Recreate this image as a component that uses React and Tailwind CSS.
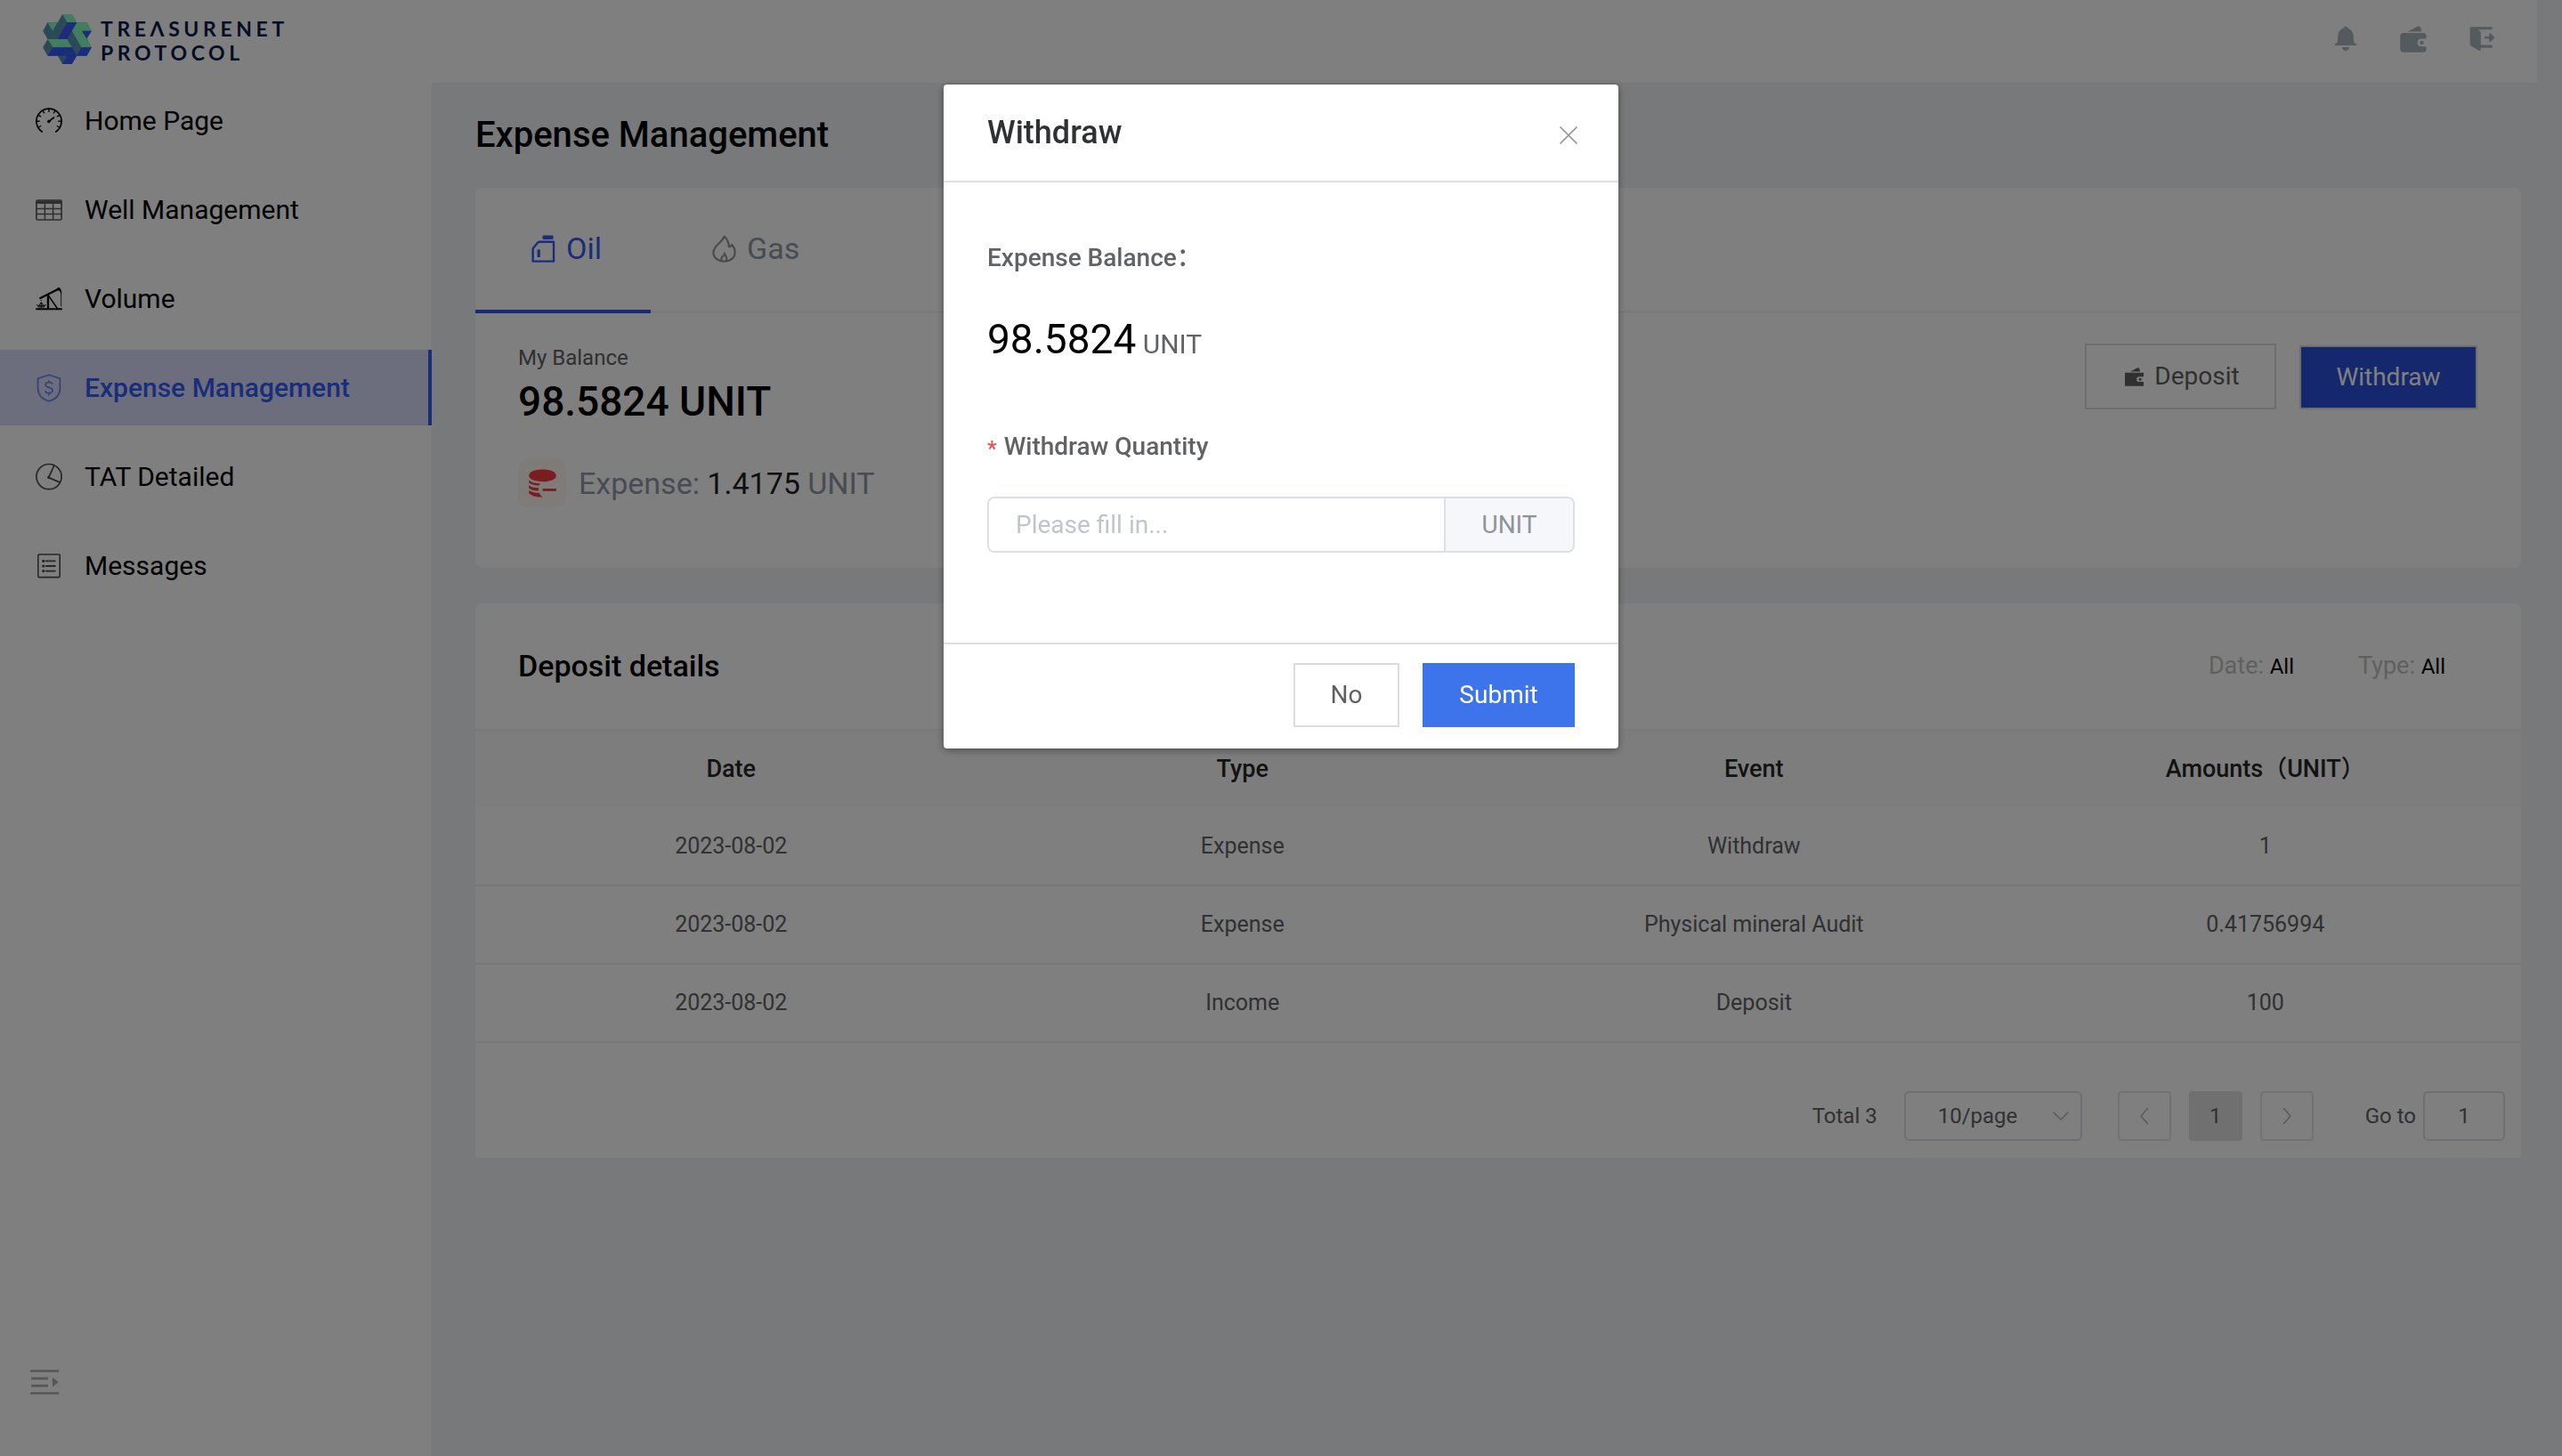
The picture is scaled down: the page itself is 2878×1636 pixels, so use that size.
import React from "react";

const TICKS = [-120, -90, -60, -30, 0, 30, 60, 90, 120];

function GaugeIcon() {
  return (
    <svg viewBox="0 0 30 30" className="size-[30px] shrink-0 text-black" fill="none" stroke="currentColor" strokeLinecap="round">
      <path d="M7.2 27 A14.1 14.1 0 1 1 22.8 27" strokeWidth="1.7" />
      {TICKS.map((angle) => (
        <path key={angle} d="M15 1.4 V4.4" strokeWidth="1.4" transform={`rotate(${angle} 15 15.3)`} />
      ))}
      <path d="M15 15.3 L20.6 11" strokeWidth="1.6" />
      <circle cx="14.8" cy="15.5" r="1.5" fill="currentColor" strokeWidth="0.6" />
    </svg>
  );
}

function TableIcon() {
  return (
    <svg viewBox="0 0 30 24" className="h-6 w-[30px] shrink-0 text-[#5c5c5c]" fill="none" stroke="currentColor" strokeWidth="1.7">
      <rect x="0.9" y="1" width="28.2" height="22" rx="1.4" />
      <path d="M1 1.4 H29 V5 H1 Z" fill="currentColor" stroke="none" />
      <path d="M1 10.4 H29 M1 16.4 H29 M10.4 5 V23 M19.6 5 V23" strokeWidth="1.5" />
    </svg>
  );
}

function PumpIcon() {
  return (
    <svg viewBox="0 0 90 78" className="h-[26px] w-[30px] shrink-0 text-black" fill="none" stroke="currentColor">
      <path d="M3 72.5 H87" strokeWidth="6" strokeLinecap="round" />
      <path d="M16 36 L77 5" strokeWidth="7" strokeLinecap="round" />
      <path d="M72 3 L79 0 C85 4 88 12 87 22 C83 12 79 8 72 9 Z" fill="currentColor" strokeWidth="1" />
      <path d="M86 18 V64" strokeWidth="2.4" />
      <path d="M42 24 V72" strokeWidth="7" />
      <path d="M44 28 L74 72" strokeWidth="4.5" />
      <path d="M4 57 L10 66 H28 L34 57 M12 60 L19 50 L26 60 M8 62 H30 M19 42 V46 M19 52 V66" strokeWidth="3" />
    </svg>
  );
}

function ShieldIcon() {
  return (
    <svg viewBox="0 0 30 32" className="h-8 w-[30px] shrink-0 text-[#6a82e4]" fill="none" stroke="currentColor" strokeWidth="1.7" strokeLinejoin="round">
      <path d="M15 1.2 L27.4 5.2 V16.5 C27.4 23.5 22.4 28.6 15 30.8 C7.6 28.6 2.6 23.5 2.6 16.5 V5.2 Z" />
      <path d="M19 11.6 C18.6 10.1 17.1 9.5 15 9.5 C12.7 9.5 11.2 10.6 11.2 12.4 C11.2 16.2 19 14.4 19 18.6 C19 20.6 17.4 21.8 15 21.8 C12.8 21.8 11.2 21 10.9 19.2 M15 7.6 V9.5 M15 21.8 V24.4" />
    </svg>
  );
}

function PieIcon() {
  return (
    <svg viewBox="0 0 30 32" className="h-8 w-[30px] shrink-0 text-[#4d4d4d]" fill="none" stroke="currentColor" strokeWidth="1.7">
      <circle cx="15" cy="15.6" r="14.1" />
      <path d="M21 2.6 L14.6 16.6 L28.2 22.4" strokeLinejoin="round" />
      <circle cx="14.8" cy="16.6" r="0.9" fill="currentColor" />
    </svg>
  );
}

function ListIcon() {
  return (
    <svg viewBox="0 0 30 28" className="h-7 w-[30px] shrink-0 text-[#4d4d4d]" fill="none" stroke="currentColor" strokeWidth="1.6" strokeLinecap="round">
      <rect x="2.8" y="1" width="24.4" height="25.6" rx="1" />
      <path d="M11.6 8.4 H21.8 M11.6 14 H21.8 M11.6 19.6 H21.8" strokeWidth="1.8" />
      <path d="M8.7 8.4 H8.8 M8.7 14 H8.8 M8.7 19.6 H8.8" strokeWidth="3.2" />
    </svg>
  );
}

function Emblem() {
  return (
    <svg viewBox="12 12 164 168" className="h-14 w-[55px] shrink-0" aria-hidden="true">
      <path fill="#5692b0" d="M78 12H110L126 40H160L176 68L160 94L176 124L160 152H126L110 180H78L62 152H28L12 124L28 96L12 68L28 40H62Z" />
      <path fill="#84fac0" d="M78 12H110L126 40H94Z M28 40H61L45 68Z M126 40H160L176 68H144L176 124H142L110 68Z M28 96H94L110 124H46Z" />
      <path fill="#3458f6" d="M94 40H126L94 96H62Z M144 68H176L160 94Z M142 124H176L160 152H126Z M46 124H110L126 152L110 180H78L94 152H28Z" />
    </svg>
  );
}

function BellIcon() {
  return (
    <svg viewBox="0 0 26 30" className="h-[30px] w-[26px]" fill="currentColor">
      <path d="M13 0.6 C14.4 0.6 15.1 1.6 15.3 2.6 C19.5 4 21.6 7.5 21.7 11.5 C21.8 15.5 22 18 23.2 19.4 L25 20.2 C25.8 20.8 25.6 22 24.6 22 H1.4 C0.4 22 0.2 20.8 1 20.2 L2.8 19.4 C4 18 4.2 15.5 4.3 11.5 C4.4 7.5 6.5 4 10.7 2.6 C10.9 1.6 11.6 0.6 13 0.6 Z" />
      <path d="M8.8 23.9 H17.2 C16.6 26.4 15 27.9 13 27.9 C11 27.9 9.4 26.4 8.8 23.9 Z" />
    </svg>
  );
}

function WalletIcon({ square = false }) {
  return (
    <svg viewBox="0 0 30 30" className={square ? "size-[21px]" : "size-[30px]"} fill="currentColor">
      <path d="M8.5 6.6 L19 0.9 C21.2 -0.1 23 0.9 23.6 2.9 L24.4 6.6 Z" />
      <path
        d={
          square
            ? "M0 8.2 H30 V14.5 H23 A4 4 0 0 0 23 23 H30 V29.6 H0 Z"
            : "M4 8 H26 A3.8 3.8 0 0 1 29.6 11.6 V14.6 H23.8 A4.3 4.3 0 0 0 23.8 23.2 H29.6 V26 A3.8 3.8 0 0 1 26 29.8 H4 A3.8 3.8 0 0 1 0.2 26 V11.8 A3.8 3.8 0 0 1 4 8 Z"
        }
      />
      <circle cx="24.5" cy="18.9" r="2.2" />
    </svg>
  );
}

function ExitIcon() {
  return (
    <svg viewBox="0 0 30 30" className="size-[30px]" fill="currentColor">
      <path d="M1.4 1.2 H24.5 A1.5 1.5 0 0 1 24.5 4.2 H9.5 L12.8 6.8 V21.6 H24.5 A1.5 1.5 0 0 1 24.5 24.8 H12.8 V26.6 A1.4 1.4 0 0 1 10.6 27.8 L1.4 22.2 A1.6 1.6 0 0 1 0.6 21 V2.4 A1.2 1.2 0 0 1 1.4 1.2 Z" />
      <path d="M18 12 H22 V9.4 A1.2 1.2 0 0 1 24 8.6 L28.6 13.2 L24 17.8 A1.2 1.2 0 0 1 22 17 V14.6 H18 A1.3 1.3 0 0 1 18 12 Z" />
    </svg>
  );
}

function CollapseIcon() {
  return (
    <svg viewBox="0 0 32 28" className="h-7 w-8" fill="currentColor">
      <path d="M0 0.2H32V2.8H0Z M1 8.6H20V11.2H1Z M1 16.8H20V19.4H1Z M0 25.2H32V27.8H0Z M25 8.6L31.6 14L25 19.4Z" />
    </svg>
  );
}

function OilIcon() {
  return (
    <svg viewBox="0 0 27 31" className="h-[31px] w-[27px]" fill="none" stroke="currentColor" strokeWidth="2.4" strokeLinejoin="round">
      <rect x="12.5" y="0.4" width="12" height="4.6" rx="1.2" fill="currentColor" stroke="none" />
      <path d="M9.4 7.8 H25 V29.6 H1.6 V16.4 Q1.6 15.4 2.2 14.6 L7 8.8 Q7.8 7.8 9.4 7.8 Z" />
      <path d="M8.2 16.4 V25" strokeWidth="3.2" />
    </svg>
  );
}

function GasIcon() {
  return (
    <svg viewBox="0 0 27 31" className="h-[31px] w-[27px] text-[#959595]" fill="none" stroke="currentColor" strokeWidth="2.2" strokeLinejoin="round">
      <path d="M13.4 1.6 C11.6 8.4 1.4 12 1.4 19.4 C1.4 25.6 6.6 29.6 13.4 29.6 C20.4 29.6 25.6 25.6 25.6 19.4 C25.6 16 24.4 13.2 22.2 11 C21.6 12.4 20.6 13.2 18.8 13.2 C18.8 8.2 16.8 4.4 13.4 1.6 Z" />
      <path d="M10.8 29 C9.6 26.4 11 24.4 12.6 23.4 C13.6 22.6 14 21.4 14 20.6 C14.4 23.6 17.2 24.4 16.4 29" strokeWidth="2" />
    </svg>
  );
}

function CoinsIcon() {
  return (
    <svg viewBox="0 0 31 32" className="h-8 w-[31px] text-[#f13c41]" fill="currentColor">
      <path d="M15.5 0.5 C24 0.5 30.8 3.2 30.8 7.2 C30.8 10.8 27 13 22 13.4 C18 15 14 14 10 13.6 C4 12.8 0.2 10.6 0.2 7.2 C0.2 3.2 7 0.5 15.5 0.5 Z" />
      <path d="M0.2 12.4 C3 15.2 7.4 16.2 12.8 16.2 L11.6 18.6 C6 18.4 2.2 17.4 0.2 15.6 Z M0.2 18.2 C3 20.6 6.6 21.2 11 21.2 V24.6 C6 24.4 2.2 23.2 0.2 21.4 Z M0.2 24 C3 26 7 26.8 11.6 26.8 C12.6 29 14 30.4 16 31.6 C8.6 31.8 2.6 30 0.2 27.2 Z" />
      <path d="M15.6 22 H30.8 V24.8 H15.6 Z" />
    </svg>
  );
}

const NAV = [
  { label: "Home Page", Icon: GaugeIcon },
  { label: "Well Management", Icon: TableIcon },
  { label: "Volume", Icon: PumpIcon },
  { label: "Expense Management", Icon: ShieldIcon, active: true },
  { label: "TAT Detailed", Icon: PieIcon },
  { label: "Messages", Icon: ListIcon },
];

const ROWS = [
  ["2023-08-02", "Expense", "Withdraw", "1"],
  ["2023-08-02", "Expense", "Physical mineral Audit", "0.41756994"],
  ["2023-08-02", "Income", "Deposit", "100"],
];

function Header() {
  return (
    <header className="mr-7 flex h-[93px] items-center justify-between bg-white pl-12 pr-[46px]">
      <div className="flex items-center gap-[10px] pb-[5px]">
        <Emblem />
        <p className="pt-[3px] font-[Lato,sans-serif] text-[23px] leading-[27px] font-bold tracking-[0.2em] text-[#0a1b4d]">
          TRE&Lambda;SURENET
          <br />
          PROTOCOL
        </p>
      </div>
      <div className="flex items-center gap-12 pb-[6px] text-[#a9b6be]">
        <button type="button" aria-label="Notifications"><BellIcon /></button>
        <button type="button" aria-label="Wallet"><WalletIcon /></button>
        <button type="button" aria-label="Log out"><ExitIcon /></button>
      </div>
    </header>
  );
}

function Sidebar() {
  return (
    <aside className="flex w-[485px] shrink-0 flex-col justify-between bg-white">
      <nav className="flex flex-col gap-[15px]">
        {NAV.map(({ label, Icon, active }) => (
          <a
            key={label}
            href="#"
            className={
              active
                ? "flex h-[85px] items-center gap-[25px] border-r-4 border-[#345af6] bg-[#d9ddfd] pl-10 text-[30px] font-medium text-[#345af6]"
                : "flex h-[85px] items-center gap-[25px] pl-10 text-[30px] text-black"
            }
          >
            <Icon />
            {label}
          </a>
        ))}
      </nav>
      <button type="button" aria-label="Expand menu" className="mb-[69px] ml-[34px] w-8 text-[#adadad]">
        <CollapseIcon />
      </button>
    </aside>
  );
}

function BalanceCard() {
  return (
    <section className="rounded-lg bg-white pb-[68px]">
      <div role="tablist" className="flex h-[140px] border-b border-[#e4e7ed]">
        <button type="button" role="tab" aria-selected="true" className="flex h-[141px] w-[197px] items-center justify-center gap-3 border-b-4 border-[#2e54e8] pl-2 text-[34px] text-[#345af6]">
          <OilIcon />
          Oil
        </button>
        <button type="button" role="tab" aria-selected="false" className="flex h-[141px] items-center gap-3 border-b-4 border-transparent px-[69px] text-[34px] text-[#8f98a6]">
          <GasIcon />
          Gas
        </button>
      </div>
      <div className="flex items-start justify-between pl-12 pr-[49px] pt-[35px]">
        <div>
          <p className="text-2xl leading-8 text-[#606060]">My Balance</p>
          <p className="mt-[3px] text-[46px] leading-[60px] font-medium text-black">98.5824 UNIT</p>
          <div className="mt-[35px] flex items-center gap-[14px]">
            <span className="flex size-[54px] items-center justify-center rounded-[10px] bg-[#fdf7f2]">
              <CoinsIcon />
            </span>
            <p className="text-[34px] leading-[54px] text-[#8f98a6]">
              Expense: <span className="text-[#1f1f1f]">1.4175</span> UNIT
            </p>
          </div>
        </div>
        <div className="flex items-end gap-[26px]">
          <button type="button" className="flex h-[74px] w-[215px] items-center justify-center gap-3 border-2 border-[#dcdcdc] pl-1 text-[28px] text-[#606060]">
            <WalletIcon square />
            Deposit
          </button>
          <button type="button" className="h-[72px] w-[200px] border-2 border-[#dcdcdc] bg-[#2b50dc] text-[28px] text-white">
            Withdraw
          </button>
        </div>
      </div>
    </section>
  );
}

function Chevron({ d }) {
  return (
    <svg viewBox="0 0 20 20" className="size-5" fill="none" stroke="currentColor" strokeWidth="1.6" strokeLinecap="round" strokeLinejoin="round">
      <path d={d} />
    </svg>
  );
}

function Pagination() {
  return (
    <div className="flex items-center justify-end px-[18px] pt-[54px] pb-[19px] text-2xl text-[#606266]">
      <span>Total 3</span>
      <div className="relative ml-[30px]">
        <select aria-label="Rows per page" defaultValue="10" className="block h-14 w-[200px] appearance-none rounded-md border-2 border-[#dcdfe6] bg-white pl-9">
          <option value="10">10/page</option>
        </select>
        <span className="pointer-events-none absolute right-[14px] top-[18px] text-[#b4b7bd]">
          <Chevron d="M2 6 L10 14 L18 6" />
        </span>
      </div>
      <button type="button" aria-label="Previous page" className="ml-10 flex h-14 w-[60px] items-center justify-center rounded border-2 border-[#e4e4e6] text-[#b4b7bd]">
        <Chevron d="M13.5 1.5 L6 10 L13.5 18.5" />
      </button>
      <button type="button" aria-current="page" className="ml-5 h-14 w-[60px] rounded bg-[#e0e0e0]">1</button>
      <button type="button" aria-label="Next page" className="ml-5 flex h-14 w-[60px] items-center justify-center rounded border-2 border-[#e4e4e6] text-[#b4b7bd]">
        <Chevron d="M6.5 1.5 L14 10 L6.5 18.5" />
      </button>
      <label htmlFor="page" className="ml-[58px]">Go to</label>
      <input id="page" defaultValue="1" className="ml-2 h-14 w-[92px] rounded-md border-2 border-[#dcdfe6] bg-white text-center" />
    </div>
  );
}

function DetailsCard() {
  return (
    <section className="mt-10 rounded-t-lg bg-white">
      <div className="flex h-[143px] items-center justify-between border-b-2 border-[#f2f2f2] pl-12 pr-[85px]">
        <h2 className="text-[34px] font-medium text-black">Deposit details</h2>
        <div className="flex gap-[72px] text-[27px] text-[#c0c0c0]">
          <button type="button">Date: <span className="text-2xl text-black">All</span></button>
          <button type="button">Type: <span className="text-2xl text-black">All</span></button>
        </div>
      </div>
      <table className="w-full table-fixed text-center">
        <thead>
          <tr className="h-[86px] bg-[#fafafa] text-[27px] text-[#262626]">
            {["Date", "Type", "Event", "Amounts（UNIT）"].map((name) => (
              <th key={name} className="font-medium">{name}</th>
            ))}
          </tr>
        </thead>
        <tbody>
          {ROWS.map((row, i) => (
            <tr key={i} className="h-[88px] border-b-2 border-[#f0f0f0] text-[25px] text-[#606266]">
              {row.map((cell, j) => (
                <td key={j}>{cell}</td>
              ))}
            </tr>
          ))}
        </tbody>
      </table>
      <Pagination />
    </section>
  );
}

function WithdrawDialog() {
  return (
    <div className="fixed inset-0 flex items-start justify-center bg-black/50 pt-[95px]">
      <form role="dialog" aria-modal="true" aria-labelledby="dialog-title" className="w-[758px] rounded bg-white shadow-[0_2px_8px_rgba(0,0,0,0.4)]">
        <div className="flex h-[110px] items-center justify-between border-b-2 border-[#dcdfe6] pl-[49px] pr-[46px]">
          <h2 id="dialog-title" className="text-[36px] font-medium text-[#303133]">Withdraw</h2>
          <button type="button" aria-label="Close" className="pt-[6px] text-[#909399]">
            <svg viewBox="0 0 20 20" className="size-5" stroke="currentColor" strokeWidth="1.7" strokeLinecap="round">
              <path d="M1 1 L19 19 M19 1 L1 19" />
            </svg>
          </button>
        </div>
        <div className="px-[49px] pt-[65px] pb-[101px]">
          <p className="text-[28px] leading-10 font-medium text-[#606266]">Expense Balance：</p>
          <p className="mt-[41px] text-[30px] leading-[60px] text-[#606266]">
            <span className="text-[46px] text-black">98.5824</span> UNIT
          </p>
          <label htmlFor="quantity" className="mt-[65px] flex gap-2 text-[28px] leading-10 font-medium text-[#606266]">
            <span className="pt-1 text-2xl leading-9 text-[#f04b4b]">*</span>
            Withdraw Quantity
          </label>
          <div className="mt-9 flex h-[63px] overflow-hidden rounded-lg border-2 border-[#dcdfe6] text-[28px]">
            <input id="quantity" placeholder="Please fill in..." className="min-w-0 flex-1 bg-white pl-[30px] placeholder:text-[#c0c4cc]" />
            <span className="flex w-[145px] items-center justify-center border-l-2 border-[#dcdfe6] bg-[#f5f7fa] text-[#909399]">UNIT</span>
          </div>
        </div>
        <div className="flex justify-end gap-[26px] border-t-2 border-[#dcdfe6] pt-[21px] pr-[49px] pb-6">
          <button type="button" className="h-[72px] w-[119px] border-2 border-[#dcdcdc] text-[28px] text-[#606060]">No</button>
          <button type="submit" className="h-[72px] w-[171px] bg-[#3e74eb] text-[28px] text-white">Submit</button>
        </div>
      </form>
    </div>
  );
}

export default function App() {
  return (
    <div className="flex min-h-screen flex-col bg-[#f0f2f5] font-[Roboto,'Noto_Sans_CJK_SC',sans-serif]">
      <Header />
      <div className="flex flex-1">
        <Sidebar />
        <main className="min-w-0 flex-1 pl-[49px] pr-[46px]">
          <h1 className="py-[34px] text-[40px] leading-[50px] font-medium text-black">Expense Management</h1>
          <BalanceCard />
          <DetailsCard />
        </main>
      </div>
      <WithdrawDialog />
    </div>
  );
}
